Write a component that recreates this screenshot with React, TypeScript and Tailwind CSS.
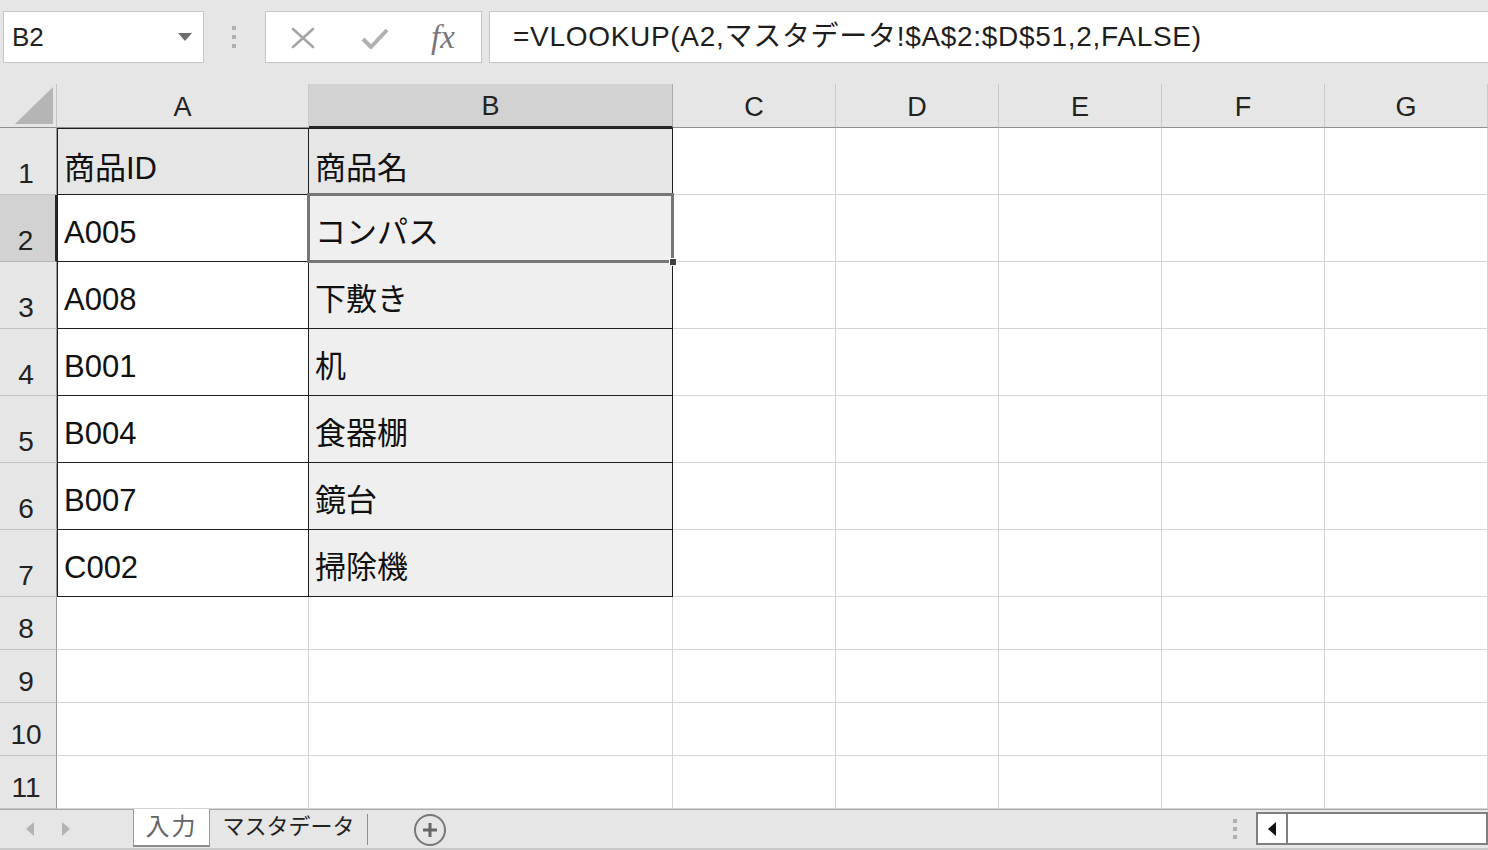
import type { ReactNode } from "react";

const columns = ["A", "B", "C", "D", "E", "F", "G"];

const items = [
  { id: "商品ID", name: "商品名" },
  { id: "A005", name: "コンパス" },
  { id: "A008", name: "下敷き" },
  { id: "B001", name: "机" },
  { id: "B004", name: "食器棚" },
  { id: "B007", name: "鏡台" },
  { id: "C002", name: "掃除機" },
];

const emptyRows = [8, 9, 10, 11];

function ToolbarBox({ className, children }: { className: string; children: ReactNode }) {
  return (
    <div className={`flex h-[52px] shrink-0 items-center border border-[#c6c6c6] bg-white ${className}`}>
      {children}
    </div>
  );
}

function FormulaBar() {
  return (
    <div className="flex h-[84px] shrink-0 items-start pl-[3px] pt-[11px]">
      <ToolbarBox className="w-[201px] justify-between pl-[8px] pr-[11px]">
        <span className="text-[26px] leading-none text-[#222]">B2</span>
        <svg width="14" height="8" viewBox="0 0 14 8">
          <path d="M0 0 L14 0 L7 8 Z" fill="#6e6e6e" />
        </svg>
      </ToolbarBox>

      <div className="flex h-[52px] w-[61px] shrink-0 flex-col items-center justify-center gap-[5px] pr-[2px]">
        <span className="h-[4px] w-[4px] bg-[#b0b0b0]" />
        <span className="h-[4px] w-[4px] bg-[#b0b0b0]" />
        <span className="h-[4px] w-[4px] bg-[#b0b0b0]" />
      </div>

      <ToolbarBox className="w-[217px] pl-[25px]">
        <svg width="24" height="24" viewBox="0 0 24 24" className="mt-[2px]">
          <path d="M2 3 L22 21 M22 3 L2 21" stroke="#a6a6a6" strokeWidth="2.6" strokeLinecap="round" />
        </svg>
        <svg width="30" height="26" viewBox="0 0 30 26" className="ml-[45px] mt-[2px]">
          <path d="M3 14 L11 22 L27 5" stroke="#b0b0b0" strokeWidth="4" fill="none" strokeLinejoin="round" />
        </svg>
        <span className="ml-[41px] font-['Liberation_Serif',serif] text-[33px] italic leading-none text-[#777]">fx</span>
      </ToolbarBox>

      <ToolbarBox className="ml-[7px] w-[1010px] pl-[23px]">
        <span className="text-[28px] leading-none tracking-[0.7px] text-[#1d1d1d]">
          =VLOOKUP(A2,マスタデータ!$A$2:$D$51,2,FALSE)
        </span>
      </ToolbarBox>
    </div>
  );
}

function HeaderRow() {
  return (
    <>
      <div className="relative border-b border-r border-b-[#8f8f8f] border-r-[#c4c4c4] bg-[#e6e6e6]">
        <svg width="38" height="37" viewBox="0 0 38 37" className="absolute bottom-[3px] right-[3px]">
          <path d="M0 37 L38 37 L38 0 Z" fill="#b5b5b5" />
        </svg>
      </div>
      {columns.map((col) =>
        col === "B" ? (
          <div
            key={col}
            className="flex items-center justify-center border-b-2 border-r border-b-[#262626] border-r-[#ababab] bg-[#d2d2d2] pt-[2px] text-[27px] leading-none text-[#222]"
          >
            {col}
          </div>
        ) : (
          <div
            key={col}
            className="flex items-center justify-center border-b border-r border-b-[#8f8f8f] border-r-[#c9c9c9] bg-[#e6e6e6] pt-[3px] text-[27px] leading-none text-[#222]"
          >
            {col}
          </div>
        ),
      )}
    </>
  );
}

function RowNumber({ n }: { n: number }) {
  if (n === 2) {
    return (
      <div className="flex items-end justify-center border-b border-r-2 border-b-[#b8b8b8] border-r-[#262626] bg-[#d2d2d2] pb-[6px] pr-[4px] text-[28px] leading-none text-[#222]">
        {n}
      </div>
    );
  }
  return (
    <div className="flex items-end justify-center border-b border-r border-b-[#c3c3c3] border-r-[#9b9b9b] bg-[#e6e6e6] pb-[6px] pr-[4px] text-[28px] leading-none text-[#222]">
      {n}
    </div>
  );
}

function EmptyCells() {
  return (
    <>
      {[0, 1, 2, 3, 4].map((i) => (
        <div key={i} className="border-b border-r border-[#d4d4d4] bg-white" />
      ))}
    </>
  );
}

function TableRows() {
  return (
    <>
      {items.map((item, i) => {
        const row = i + 1;
        const isHead = row === 1;
        return (
          <div key={row} className="contents">
            <RowNumber n={row} />
            <div
              className={`flex items-end border-b border-l border-r border-[#1e1e1e] pl-[6px] text-[31px] leading-none text-[#111] ${
                isHead ? "border-t bg-[#e6e6e6] pb-[10px]" : "bg-white pb-[13px]"
              }`}
            >
              {item.id}
            </div>
            <div
              className={`relative flex items-end border-b border-r border-[#1e1e1e] pl-[6px] text-[31px] leading-none text-[#111] ${
                isHead ? "border-t bg-[#e6e6e6] pb-[10px]" : "bg-[#efefef] pb-[13px]"
              }`}
            >
              {item.name}
              {row === 2 ? (
                <>
                  <span className="absolute -left-[2px] -top-[2px] z-10 h-[70px] w-[367px] border-[3px] border-[#767676]" />
                  <span className="absolute -bottom-[5px] -right-[5px] z-20 h-[8px] w-[8px] border border-white bg-[#3e3e3e]" />
                </>
              ) : null}
            </div>
            <EmptyCells />
          </div>
        );
      })}
      {emptyRows.map((row) => (
        <div key={row} className="contents">
          <RowNumber n={row} />
          <div className="border-b border-r border-[#d4d4d4] bg-white" />
          <div className="border-b border-r border-[#d4d4d4] bg-white" />
          <EmptyCells />
        </div>
      ))}
    </>
  );
}

function SheetTabs() {
  return (
    <div className="flex h-[41px] shrink-0 items-start border-b-2 border-t border-b-[#c8c8c8] border-t-[#a8a8a8] bg-[#e6e6e6]">
      <div className="flex h-[37px] w-[133px] shrink-0 items-center gap-[28px] pl-[26px]">
        <svg width="8" height="14" viewBox="0 0 8 14">
          <path d="M8 0 L0 7 L8 14 Z" fill="#b3b3b3" />
        </svg>
        <svg width="8" height="14" viewBox="0 0 8 14">
          <path d="M0 0 L8 7 L0 14 Z" fill="#b3b3b3" />
        </svg>
      </div>
      <div className="-mt-px flex h-[38px] w-[77px] shrink-0 items-center justify-center border-x border-b-2 border-x-[#9a9a9a] border-b-[#8a8a8a] bg-white text-[24px] tracking-[2px] text-[#666]">
        入力
      </div>
      <div className="flex h-[37px] w-[157px] shrink-0 items-center justify-center pb-[4px] text-[22px] text-[#222]">
        マスタデータ
      </div>
      <span className="mt-[4px] h-[31px] w-px shrink-0 bg-[#8e8e8e]" />
      <div className="ml-[46px] mt-[4px] flex h-[32px] w-[32px] shrink-0 items-center justify-center rounded-full border-2 border-[#777]">
        <svg width="18" height="18" viewBox="0 0 18 18">
          <path d="M9 2 V16 M2 9 H16" stroke="#666" strokeWidth="3" />
        </svg>
      </div>

      <div className="ml-auto flex h-[37px] items-center">
        <div className="mr-[19px] flex flex-col gap-[4px]">
          <span className="h-[4px] w-[4px] bg-[#b0b0b0]" />
          <span className="h-[4px] w-[4px] bg-[#b0b0b0]" />
          <span className="h-[4px] w-[4px] bg-[#b0b0b0]" />
        </div>
        <div className="flex h-[33px] w-[32px] items-center justify-center border-2 border-[#7f7f7f] bg-white">
          <svg width="8" height="14" viewBox="0 0 8 14">
            <path d="M8 0 L0 7 L8 14 Z" fill="#111" />
          </svg>
        </div>
        <div className="-ml-[2px] h-[33px] w-[202px] border-2 border-[#7f7f7f] bg-white" />
      </div>
    </div>
  );
}

export default function App() {
  return (
    <div className="flex h-[850px] w-[1488px] flex-col overflow-hidden bg-[#e6e6e6] font-['Liberation_Sans','Noto_Sans_CJK_JP',sans-serif]">
      <FormulaBar />
      <div className="grid shrink-0 grid-cols-[57px_252px_364px_163px_163px_163px_163px_163px] grid-rows-[44px_repeat(7,67px)_repeat(4,53px)]">
        <HeaderRow />
        <TableRows />
      </div>
      <SheetTabs />
    </div>
  );
}
